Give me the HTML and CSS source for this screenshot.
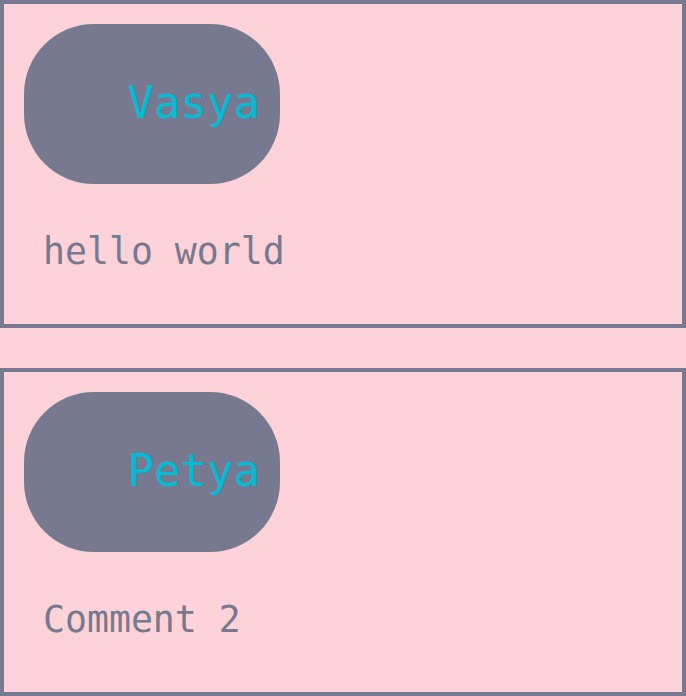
FILE: index.html
```html
<!DOCTYPE html>
<html>
<head>
<meta charset="utf-8">
<link rel="stylesheet" href="styles.css">
</head>
<body>
<div class="list">
  <div class="comment">
    <div class="author"><span class="name">Vasya</span></div>
    <div class="text">hello world</div>
  </div>
  <div class="comment">
    <div class="author"><span class="name">Petya</span></div>
    <div class="text">Comment 2</div>
  </div>
</div>
</body>
</html>
```
FILE: styles.css
```css
html, body {
  margin: 0;
  padding: 0;
  background: #fdd3d9;
}
body {
  font-family: "DejaVu Sans Mono", monospace;
}
.list {
  display: flex;
  flex-direction: column;
  gap: 40px;
}
.comment {
  box-sizing: border-box;
  width: 686px;
  height: 328px;
  border: 4px solid #76798f;
  padding: 20px;
}
.author {
  box-sizing: border-box;
  width: 256px;
  height: 160px;
  border-radius: 70px;
  background: #76798f;
  display: flex;
  align-items: center;
  justify-content: flex-end;
  padding-right: 20px;
}
.name {
  color: #00bcd4;
  font-size: 44px;
  line-height: 1;
  margin-top: -2px;
}
.text {
  color: #76798f;
  font-size: 36.5px;
  line-height: 42px;
  padding: 47px 0 0 19px;
}
```
